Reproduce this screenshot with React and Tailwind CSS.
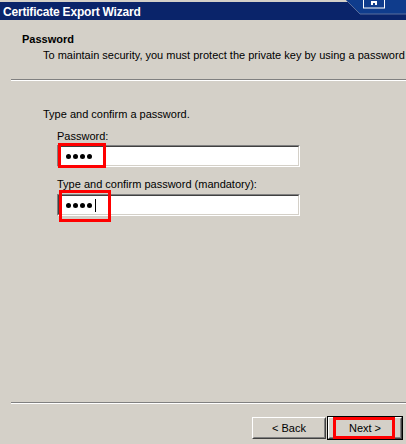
import React from "react"

function SunkenInput({ children }) {
  return (
    <div className="h-[22px] w-[243px] border-t-[#808080] border-l-[#808080] border-b-white border-r-white border">
      <div className="h-full w-full bg-white border-t-[#404040] border-l-[#404040] border-b-[#d4d0c8] border-r-[#d4d0c8] border flex items-center pl-[7px]">
        {children}
      </div>
    </div>
  )
}

function Dots({ cursor }) {
  return (
    <div className="flex items-center gap-[2px]">
      {[0, 1, 2, 3].map((i) => (
        <span key={i} className="w-[5px] h-[5px] rounded-full bg-black" />
      ))}
      {cursor && <span className="ml-[1px] w-[1px] h-[13px] bg-black" />}
    </div>
  )
}

function WinButton({ children, isDefault }) {
  return (
    <div className={isDefault ? "border border-black" : "border border-transparent"}>
      <div className="w-[74px] h-[22px] border border-t-white border-l-white border-b-[#404040] border-r-[#404040] bg-[#d4d0c8]">
        <div className="h-full w-full border border-t-[#d4d0c8] border-l-[#d4d0c8] border-b-[#808080] border-r-[#808080] flex items-center justify-center text-black">
          {children}
        </div>
      </div>
    </div>
  )
}

export default function App() {
  return (
    <div className="w-[406px] h-[444px] bg-[#d4d0c8] flex flex-col overflow-hidden relative text-[11px] text-black" style={{ fontFamily: '"Liberation Sans", Arial, sans-serif' }}>
      {/* title bar */}
      <div className="h-[20px] border-t-2 border-[#d4d0c8] bg-[#0a246a] relative shrink-0">
        <span className="absolute left-[3px] top-[1px] text-white font-bold text-[12px] tracking-[-0.2px]">Certificate Export Wizard</span>
        <svg className="absolute right-0 top-[-2px]" width="60" height="16" viewBox="0 0 60 16">
          <polygon points="0,0 60,0 60,14 14,14" fill="#0f3c8c" />
          <polyline points="0,0 14,14 60,14" fill="none" stroke="#5a6e9c" strokeWidth="1" />
          <rect x="17.5" y="-1" width="21" height="9" fill="none" stroke="#ffffff" strokeWidth="1" />
          <rect x="25" y="1" width="6" height="4" fill="#ffffff" />
          <rect x="27" y="3" width="2" height="3" fill="#0f3c8c" />
        </svg>
      </div>

      {/* header */}
      <div className="h-[59px] shrink-0 pl-[22px] pt-[12px]">
        <div className="font-bold leading-[14px]">Password</div>
        <div className="pl-[21px] mt-[2px] leading-[14px] whitespace-nowrap">To maintain security, you must protect the private key by using a password</div>
      </div>
      <div className="ml-[11px] h-[2px] border-t border-t-[#808080] border-b border-b-white shrink-0" />

      {/* body */}
      <div className="flex-1 pl-[43px] pt-[26px]">
        <div className="leading-[14px]">Type and confirm a password.</div>
        <div className="pl-[14px] mt-[8px]">
          <div className="leading-[14px]">Password:</div>
          <div className="mt-[2px] relative">
            <SunkenInput><Dots /></SunkenInput>
            <div className="absolute left-[1px] top-[-2px] w-[48px] h-[25px] border-[3px] border-[#ff0000]" />
          </div>
          <div className="leading-[14px] mt-[10px]">Type and confirm password (mandatory):</div>
          <div className="mt-[3px] relative">
            <SunkenInput><Dots cursor /></SunkenInput>
            <div className="absolute left-[2px] top-[-4px] w-[52px] h-[32px] border-[3px] border-[#ff0000]" />
          </div>
        </div>
      </div>

      {/* footer */}
      <div className="ml-[11px] h-[2px] border-t border-t-[#808080] border-b border-b-white shrink-0" />
      <div className="h-[40px] shrink-0 flex justify-end items-start pt-[12px] pr-[3px]">
        <WinButton>&lt; Back</WinButton>
        <div className="relative">
          <WinButton isDefault>Next &gt;</WinButton>
          <div className="absolute left-[6px] top-[1px] w-[62px] h-[22px] border-[3px] border-[#ff0000]" />
        </div>
      </div>
    </div>
  )
}
